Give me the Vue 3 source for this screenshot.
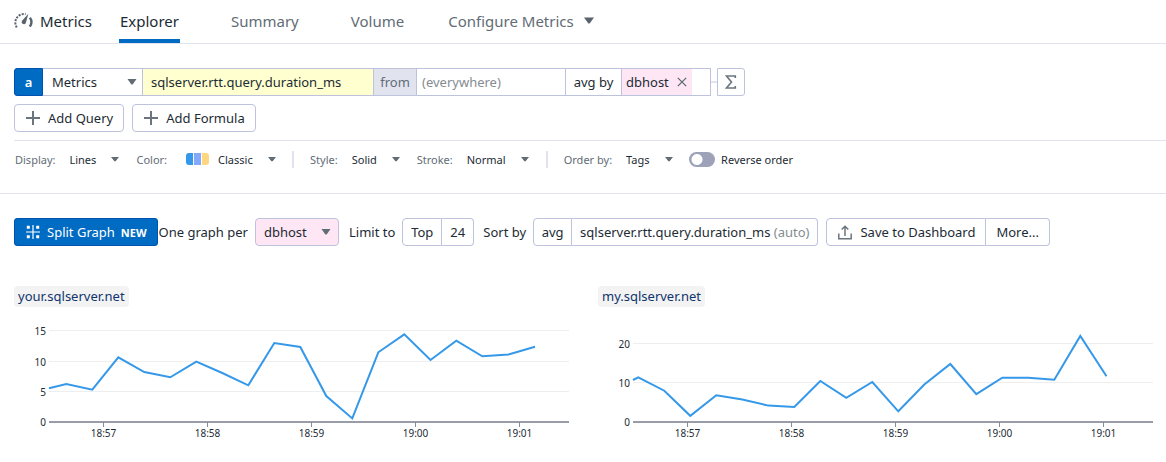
<script setup>
import { ref } from 'vue'

const source = ref('Metrics')
const metric = ref('sqlserver.rtt.query.duration_ms')
const scope = ref('')
const limit = ref('24')
const splitTag = ref('dbhost')
const reverse = ref(false)

const ticks = [
  { x: 89, label: '18:57' },
  { x: 193, label: '18:58' },
  { x: 297, label: '18:59' },
  { x: 401, label: '19:00' },
  { x: 505, label: '19:01' },
]

const charts = [
  {
    name: 'your.sqlserver.net',
    grid: [
      { y: 10.5, label: '15' },
      { y: 41.5, label: '10' },
      { y: 71.5, label: '5' },
      { y: 102, label: '0' },
    ],
    points:
      '35,68.3 52.3,64 78.3,69.7 104.3,37.3 130.3,52 156.3,57.3 182.3,41.7 208.3,53 234.3,65.3 260.3,23 286.3,27 312.3,76 338.3,98.4 364.3,32.3 390.3,14.4 416.5,40 442.3,20.7 468.3,36.3 494.5,34.5 521,26.7',
  },
  {
    name: 'my.sqlserver.net',
    grid: [
      { y: 23.5, label: '20' },
      { y: 62.5, label: '10' },
      { y: 102, label: '0' },
    ],
    points:
      '35,60 40.3,57.3 66.3,70.7 92.3,95.8 118.3,75.2 144.3,79.5 170.3,85.6 196.3,87 222.3,61 248.3,77.8 274.3,62 300.3,91.3 326.3,64.5 352.3,44 378.3,74.2 404.3,57.7 430.3,57.7 456.3,59.8 482.3,16 508.5,56.3',
  },
]
</script>

<template>
  <div class="page">
    <header class="nav">
      <div class="brand">
        <svg width="20" height="18" viewBox="0 0 20 18" fill="none" aria-hidden="true">
          <path d="M2.800 15.400A8.600 8.600 0 0 1 11.600 2.200" stroke="#59636e" stroke-width="2" stroke-dasharray="2 1.200" />
          <path d="M15.900 5.600c1.900 2.600 2 6-.1 9" stroke="#59636e" stroke-width="2.400" />
          <path d="M14.400 1.800 11.700 11.200a2.200 2.200 0 1 1-3.700-2.400z" fill="#59636e" />
        </svg>
        <span>Metrics</span>
      </div>
      <nav class="tabs">
        <a href="#explorer" class="tab active">Explorer</a>
        <a href="#summary" class="tab">Summary</a>
        <a href="#volume" class="tab">Volume</a>
        <a href="#configure" class="tab configure">Configure Metrics
          <svg class="tab-caret" width="12" height="7" viewBox="0 0 12 7" aria-hidden="true"><path d="M1 .5h10L7 6q-1 1-2 0z" fill="#59636e" /></svg>
        </a>
      </nav>
    </header>

    <section class="editor">
      <div class="query">
        <button class="letter" type="button">a</button>
        <div class="pick source">
          <select v-model="source" aria-label="Source"><option>Metrics</option></select>
          <svg class="caret" width="10" height="6" viewBox="0 0 10 6" aria-hidden="true"><path d="M.5 0h9L6 5q-1 1-2 0z" /></svg>
        </div>
        <input v-model="metric" class="metric" type="text" aria-label="Metric" />
        <label class="from" for="scope">from</label>
        <input id="scope" v-model="scope" class="scope" type="text" placeholder="(everywhere)" />
        <button class="agg" type="button">avg by</button>
        <div class="group">
          <span class="tag">dbhost
            <button type="button" class="remove" aria-label="Remove dbhost">
              <svg width="10" height="10" viewBox="0 0 10 10" fill="none"><path d="m.8.8 8.400 8.400M9.200.8.800 9.200" stroke="#59636e" stroke-width="1.200" /></svg>
            </button>
          </span>
        </div>
        <span class="link"></span>
        <button class="sigma" type="button" aria-label="Add function">
          <svg width="12" height="14" viewBox="0 0 12 14" fill="none"><path d="M10.300 3V1H1.500L6.500 7l-5 6h8.800v-2" stroke="#6c757e" stroke-width="1.600" /></svg>
        </button>
      </div>

      <div class="adders">
        <button v-for="name in ['Add Query', 'Add Formula']" :key="name" class="box add" type="button">
          <svg width="14" height="14" viewBox="0 0 14 14" aria-hidden="true"><path d="M6 0h2v6h6v2H8v6H6V8H0V6h6z" fill="#6c757e" /></svg>
          {{ name }}
        </button>
      </div>
    </section>

    <section class="display">
      <label for="display">Display:</label>
      <div class="pick lines">
        <select id="display"><option>Lines</option></select>
        <svg class="caret" width="8" height="5" viewBox="0 0 10 6" aria-hidden="true"><path d="M0 0h10L6 5q-1 1-2 0z" /></svg>
      </div>
      <label for="color">Color:</label>
      <span class="swatch"><i></i><i></i><i></i></span>
      <div class="pick classic">
        <select id="color"><option>Classic</option></select>
        <svg class="caret" width="8" height="5" viewBox="0 0 10 6" aria-hidden="true"><path d="M0 0h10L6 5q-1 1-2 0z" /></svg>
      </div>
      <span class="rule"></span>
      <label for="style">Style:</label>
      <div class="pick solid">
        <select id="style"><option>Solid</option></select>
        <svg class="caret" width="8" height="5" viewBox="0 0 10 6" aria-hidden="true"><path d="M0 0h10L6 5q-1 1-2 0z" /></svg>
      </div>
      <label for="stroke">Stroke:</label>
      <div class="pick normal">
        <select id="stroke"><option>Normal</option></select>
        <svg class="caret" width="8" height="5" viewBox="0 0 10 6" aria-hidden="true"><path d="M0 0h10L6 5q-1 1-2 0z" /></svg>
      </div>
      <span class="rule"></span>
      <label for="order">Order by:</label>
      <div class="pick tags">
        <select id="order"><option>Tags</option></select>
        <svg class="caret" width="8" height="5" viewBox="0 0 10 6" aria-hidden="true"><path d="M0 0h10L6 5q-1 1-2 0z" /></svg>
      </div>
      <label class="reverse"><input v-model="reverse" type="checkbox" />Reverse order</label>
    </section>

    <section class="split">
      <button class="primary" type="button">
        <svg width="14" height="14" viewBox="0 0 14 14" fill="#fff" aria-hidden="true">
          <path d="M6.400 0h1.200v14H6.400zM0 6.400h14v1.200H0z" />
          <path d="M.8.800h3v3h-3zM10.200.800h3v3h-3zM.8 10.200h3v3h-3zM10.200 10.200h3v3h-3z" />
        </svg>
        Split Graph <b>NEW</b>
      </button>
      <label class="per" for="split-tag">One graph per</label>
      <div class="pick host">
        <select id="split-tag" v-model="splitTag"><option>dbhost</option></select>
        <svg class="caret" width="10" height="6" viewBox="0 0 10 6" aria-hidden="true"><path d="M.5 0h9L6 5q-1 1-2 0z" /></svg>
      </div>
      <label class="limit" for="limit">Limit to</label>
      <div class="joined">
        <button class="box top" type="button">Top</button>
        <input id="limit" v-model="limit" class="box count" type="text" />
      </div>
      <span class="sort">Sort by</span>
      <div class="joined">
        <button class="box avg" type="button">avg</button>
        <button class="box by" type="button">sqlserver.rtt.query.duration_ms <span>(auto)</span></button>
      </div>
      <div class="joined actions">
        <button class="box save" type="button">
          <svg width="14" height="15" viewBox="0 0 14 15" fill="none" stroke="#6c757e" stroke-width="1.500" aria-hidden="true"><path d="M.8 8.500v5.300h12.400V8.500M7 11V1.500M3.700 4.500 7 1.200l3.300 3.300" /></svg>
          Save to Dashboard
        </button>
        <button class="box more" type="button">More...</button>
      </div>
    </section>

    <main class="charts">
      <article v-for="chart in charts" :key="chart.name">
        <h2>{{ chart.name }}</h2>
        <svg class="plot" viewBox="0 0 555 122" role="img" :aria-label="chart.name">
          <g v-for="line in chart.grid" :key="line.label">
            <path v-if="line.label !== '0'" :d="`M35 ${line.y}h520`" stroke="#eeeeef" />
            <text x="32" :y="line.y + 4" text-anchor="end">{{ line.label }}</text>
          </g>
          <polyline :points="chart.points" fill="none" stroke="#3598e8" stroke-width="2" />
          <path d="M35 102h520" stroke="#989da9" stroke-width="2" />
          <g v-for="tick in ticks" :key="tick.label">
            <path :d="`M${tick.x + 0.5} 102v5`" stroke="#858c98" />
            <text :x="tick.x + 0.5" y="117" text-anchor="middle">{{ tick.label }}</text>
          </g>
        </svg>
      </article>
    </main>
  </div>
</template>

<style>
body {
  background: #fff;
}
</style>

<style scoped>
.page {
  font-family: "Noto Sans", sans-serif;
  font-size: 13px;
  color: #1c2b34;
}
.page * {
  box-sizing: border-box;
}
button, input, select {
  margin: 0;
  padding: 0;
  border: 0;
  border-radius: 0;
  background: none;
  font: inherit;
  color: inherit;
}
input, select {
  outline: 0;
}
button, label, span, a {
  white-space: nowrap;
}
svg {
  display: block;
  flex: none;
}
.nav {
  display: flex;
  height: 44px;
  padding-left: 14px;
  border-bottom: 1px solid #e1e3ef;
  font-size: 15px;
}
.brand {
  display: flex;
  align-items: center;
  gap: 6px;
  padding-bottom: 1px;
}
.tabs {
  display: flex;
  margin-left: 27px;
  gap: 50px;
}
.tab {
  display: flex;
  align-items: center;
  padding: 2px 1px 0;
  border-bottom: 4px solid transparent;
  color: #626c75;
  text-decoration: none;
}
.tab.active {
  color: #1c2b34;
  border-color: #006bc2;
}
.tab.configure {
  margin-left: -8px;
}
.tab-caret {
  margin-left: 9px;
}
.editor {
  margin-left: 14px;
  padding: 24px 0 8px;
  border-bottom: 1px solid #e1e3ef;
}
.query {
  display: flex;
  height: 28px;
}
.letter {
  width: 29px;
  border: 1px solid #0052b0;
  border-radius: 3px 0 0 3px;
  background: #006bc2;
  color: #fff;
  font-weight: 600;
}
.pick {
  display: grid;
  align-items: center;
}
.pick > * {
  grid-area: 1 / 1;
}
.pick select {
  width: 100%;
  height: 100%;
  appearance: none;
}
.caret {
  justify-self: end;
  fill: #626c75;
  pointer-events: none;
}
.source {
  width: 99px;
  padding: 0 5px 0 9px;
  border: solid #bdc3dd;
  border-width: 1px 0;
}
.metric {
  width: 232px;
  padding-left: 8px;
  border: 1px solid #bdc3dd;
  background: #ffffcf;
}
.from {
  width: 42px;
  border: solid #bdc3dd;
  border-width: 1px 0;
  background: #e1e3ef;
  color: #626c75;
  line-height: 26px;
  text-align: center;
}
.scope {
  width: 150px;
  padding-left: 5px;
  border: 1px solid #bdc3dd;
}
.scope::placeholder {
  color: #858c91;
  opacity: 1;
}
.agg {
  width: 55px;
  border: solid #bdc3dd;
  border-width: 1px 0;
}
.group {
  display: flex;
  width: 90px;
  border: 1px solid #bdc3dd;
}
.tag {
  display: flex;
  align-items: center;
  gap: 8px;
  padding: 0 5px 0 4px;
  background: #ffe6f5;
}
.link {
  align-self: center;
  width: 6px;
  height: 2px;
  background: #e1e3ef;
}
.sigma {
  display: grid;
  place-items: center;
  width: 28px;
  border: 1px solid #bdc3dd;
  border-radius: 0 3px 3px 0;
}
.box {
  height: 28px;
  border: 1px solid #bdc3dd;
  border-radius: 4px;
  background: #fff;
}
.adders {
  display: flex;
  gap: 8px;
  margin-top: 8px;
}
.add {
  display: flex;
  align-items: center;
  gap: 8px;
  padding: 0 10px 0 11px;
}
.display {
  display: flex;
  align-items: center;
  height: 53px;
  padding: 0 15px 16px;
  border-bottom: 1px solid #e1e3ef;
  font-size: 11px;
}
.display label {
  color: #626c75;
}
.display .pick {
  height: 20px;
  margin: 0 17px 0 14px;
}
.display .lines {
  width: 50px;
}
.swatch {
  display: flex;
  gap: 1px;
  width: 23px;
  height: 12px;
  margin-left: 19px;
  overflow: hidden;
  border-radius: 3px;
}
.swatch i {
  flex: 1;
  background: #3598e8;
}
.swatch i:nth-child(2) {
  background: #84a9fa;
}
.swatch i:nth-child(3) {
  background: #ffd780;
}
.display .classic {
  width: 58px;
  margin-left: 9px;
  margin-right: 16px;
}
.display .solid {
  width: 48px;
}
.display .normal {
  width: 62px;
}
.display .tags {
  width: 47px;
  margin-right: 16px;
}
.rule {
  width: 2px;
  height: 17px;
  margin-right: 16px;
  background: #e1e3ef;
}
.display .reverse {
  display: flex;
  align-items: center;
  gap: 6px;
  color: #1c2b34;
}
.reverse input {
  width: 26px;
  height: 15px;
  border-radius: 8px;
  appearance: none;
  background: radial-gradient(circle at 8px 50%, #fff 5px, transparent 6px) #9da2b9;
}
.reverse input:checked {
  background: radial-gradient(circle at 18px 50%, #fff 5px, transparent 6px) #006bc2;
}
.split {
  display: flex;
  align-items: center;
  padding: 24px 14px 0;
}
.primary {
  display: flex;
  align-items: center;
  height: 28px;
  padding: 0 10px 0 11px;
  border: 1px solid #0052b0;
  border-radius: 3px;
  background: #006bc2;
  color: #fff;
}
.primary svg {
  margin-right: 7px;
}
.primary b {
  margin-left: 6px;
  font-size: 11px;
  font-weight: 700;
}
.per {
  margin: 0 7px 0 1px;
}
.host {
  width: 84px;
  height: 28px;
  padding: 0 7px 0 8px;
  border: 1px solid #bdc3dd;
  border-radius: 4px;
  background: #ffe6f5;
}
.limit {
  margin: 0 7px 0 10px;
}
.joined {
  display: flex;
}
.joined .box:first-child {
  border-radius: 4px 0 0 4px;
}
.joined .box:last-child {
  border-left: 0;
  border-radius: 0 4px 4px 0;
}
.top {
  width: 40px;
}
.count {
  width: 32px;
  text-align: center;
}
.sort {
  margin: 0 7px 0 9px;
}
.avg {
  width: 39px;
}
.by {
  padding: 0 8px;
}
.by span {
  color: #858c91;
}
.actions {
  margin-left: 8px;
}
.save {
  display: flex;
  align-items: center;
  gap: 8px;
  padding: 0 10px 0 11px;
}
.more {
  padding: 0 10px;
}
.charts {
  display: grid;
  grid-template-columns: 1fr 1fr;
  gap: 29px;
  padding: 40px 13px 0 14px;
}
h2 {
  width: fit-content;
  margin: 0 0 13px;
  padding: 0 4px;
  border-radius: 4px;
  background: #f3f3f4;
  color: #10346d;
  font-size: 13px;
  font-weight: 400;
  line-height: 21px;
}
.plot {
  width: 100%;
  height: auto;
  font-size: 10px;
  fill: #1c2b34;
}
</style>
